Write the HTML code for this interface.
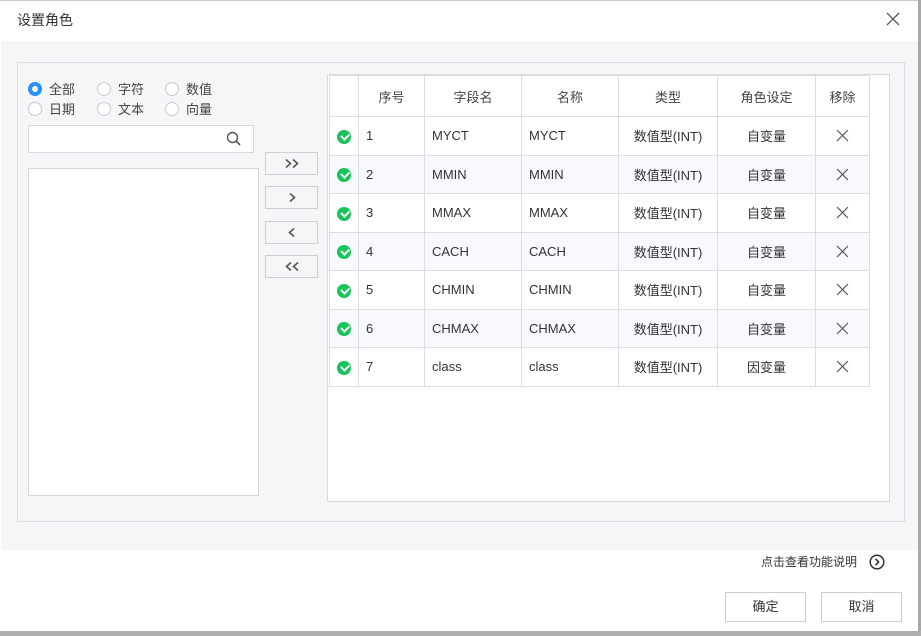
<!DOCTYPE html>
<html><head><meta charset="utf-8"><style>
*{box-sizing:border-box;margin:0;padding:0}
body{width:921px;height:636px;background:#fff;position:relative;overflow:hidden;font-family:"Liberation Sans","Noto Sans CJK SC",sans-serif;color:#333;font-size:13px}
.a{position:absolute}
.shR{left:918px;top:0;width:3px;height:636px;background:#a8a8a8}
.shB{left:0;top:631px;width:921px;height:5px;background:#b0b0b0}
.shT{left:0;top:0;width:921px;height:1px;background:#ccc}
.title{left:17px;top:10px;font-size:14px;color:#333}
.gray{left:1px;top:41px;width:917px;height:509px;background:#f5f6f8}
.panel{left:17px;top:62px;width:888px;height:460px;border:1px solid #dcdde0;background:#f5f6f8}
.rad{display:flex;align-items:center;font-size:13px;color:#444}
.rad i{width:14px;height:14px;border-radius:50%;border:1px solid #c7cad0;background:#fff;margin-right:7px;display:inline-block}
.rad i.on{border:4px solid #2a8ff7}
.box{background:#fff;border:1px solid #d5d7db}
.btn{background:#f5f6f8;border:1px solid #ccced2;width:53px;height:23px}
.btn svg{display:block;margin:5px auto 0}
table{border-collapse:collapse;position:absolute;left:329px;top:75px}
td{border:1px solid #dcdde0;height:38.5px;font-size:13px;color:#333;padding:0 0 0 7px}
tr.h td{height:41px;text-align:center;padding:0;color:#444}
tr td{background:#fff}
tr.alt td{background:#f7f9fd}
td.c{text-align:center;padding:0}
.ok{display:inline-block;width:14px;height:14px;border-radius:50%;background:#18c35b;position:relative;vertical-align:middle}
.ok:after{content:"";position:absolute;left:3.5px;top:3px;width:6px;height:3.5px;border-left:2px solid #fff;border-bottom:2px solid #fff;transform:rotate(-45deg)}
td.x svg{display:block;margin:0 auto}
.fb{border:1px solid #ccced2;background:#fff;width:81px;height:30px;font-size:13px;text-align:center;line-height:28px;color:#333}
</style></head><body>
<div class="a shT"></div>
<div class="a title">设置角色</div>
<svg class="a" style="left:886px;top:12px" width="14" height="14"><path d="M1 1L13 13M13 1L1 13" stroke="#555" stroke-width="1.3"/></svg>
<div class="a gray"></div>
<div class="a panel"></div>
<div class="a rad" style="left:28px;top:79px"><i class="on"></i>全部</div>
<div class="a rad" style="left:97px;top:79px"><i></i>字符</div>
<div class="a rad" style="left:165px;top:79px"><i></i>数值</div>
<div class="a rad" style="left:28px;top:99px"><i></i>日期</div>
<div class="a rad" style="left:97px;top:99px"><i></i>文本</div>
<div class="a rad" style="left:165px;top:99px"><i></i>向量</div>
<div class="a box" style="left:28px;top:125px;width:226px;height:28px"></div>
<svg class="a" style="left:226px;top:131px" width="16" height="16"><circle cx="6.5" cy="6.5" r="5" stroke="#555" stroke-width="1.4" fill="none"/><path d="M10.2 10.2L14 14" stroke="#555" stroke-width="1.6"/></svg>
<div class="a box" style="left:28px;top:168px;width:231px;height:328px"></div>
<div class="a btn" style="left:265px;top:152px"><svg width="16" height="11"><path d="M2 1.5L6.5 5.5L2 9.5M9 1.5L13.5 5.5L9 9.5" stroke="#555" stroke-width="1.6" fill="none"/></svg></div>
<div class="a btn" style="left:265px;top:186px"><svg width="10" height="11"><path d="M3 1.5L7.5 5.5L3 9.5" stroke="#555" stroke-width="1.6" fill="none"/></svg></div>
<div class="a btn" style="left:265px;top:221px"><svg width="10" height="11"><path d="M7 1.5L2.5 5.5L7 9.5" stroke="#555" stroke-width="1.6" fill="none"/></svg></div>
<div class="a btn" style="left:265px;top:255px"><svg width="16" height="11"><path d="M7 1.5L2.5 5.5L7 9.5M14 1.5L9.5 5.5L14 9.5" stroke="#555" stroke-width="1.6" fill="none"/></svg></div>
<div class="a box" style="left:327px;top:74px;width:563px;height:428px;border-color:#d8dade"></div>
<table>
<colgroup><col style="width:29px"><col style="width:66px"><col style="width:97px"><col style="width:97px"><col style="width:99px"><col style="width:98px"><col style="width:54px"></colgroup>
<tr class="h"><td></td><td>序号</td><td>字段名</td><td>名称</td><td>类型</td><td>角色设定</td><td>移除</td></tr>
<tr><td class="c"><span class="ok"></span></td><td>1</td><td>MYCT</td><td>MYCT</td><td class="c">数值型(INT)</td><td class="c">自变量</td><td class="c x"><svg width="13" height="13"><path d="M1 1L12 12M12 1L1 12" stroke="#555" stroke-width="1.2"/></svg></td></tr>
<tr class="alt"><td class="c"><span class="ok"></span></td><td>2</td><td>MMIN</td><td>MMIN</td><td class="c">数值型(INT)</td><td class="c">自变量</td><td class="c x"><svg width="13" height="13"><path d="M1 1L12 12M12 1L1 12" stroke="#555" stroke-width="1.2"/></svg></td></tr>
<tr><td class="c"><span class="ok"></span></td><td>3</td><td>MMAX</td><td>MMAX</td><td class="c">数值型(INT)</td><td class="c">自变量</td><td class="c x"><svg width="13" height="13"><path d="M1 1L12 12M12 1L1 12" stroke="#555" stroke-width="1.2"/></svg></td></tr>
<tr class="alt"><td class="c"><span class="ok"></span></td><td>4</td><td>CACH</td><td>CACH</td><td class="c">数值型(INT)</td><td class="c">自变量</td><td class="c x"><svg width="13" height="13"><path d="M1 1L12 12M12 1L1 12" stroke="#555" stroke-width="1.2"/></svg></td></tr>
<tr><td class="c"><span class="ok"></span></td><td>5</td><td>CHMIN</td><td>CHMIN</td><td class="c">数值型(INT)</td><td class="c">自变量</td><td class="c x"><svg width="13" height="13"><path d="M1 1L12 12M12 1L1 12" stroke="#555" stroke-width="1.2"/></svg></td></tr>
<tr class="alt"><td class="c"><span class="ok"></span></td><td>6</td><td>CHMAX</td><td>CHMAX</td><td class="c">数值型(INT)</td><td class="c">自变量</td><td class="c x"><svg width="13" height="13"><path d="M1 1L12 12M12 1L1 12" stroke="#555" stroke-width="1.2"/></svg></td></tr>
<tr><td class="c"><span class="ok"></span></td><td>7</td><td>class</td><td>class</td><td class="c">数值型(INT)</td><td class="c">因变量</td><td class="c x"><svg width="13" height="13"><path d="M1 1L12 12M12 1L1 12" stroke="#555" stroke-width="1.2"/></svg></td></tr>
</table>
<div class="a" style="left:761px;top:553px;font-size:12px;color:#333">点击查看功能说明</div>
<svg class="a" style="left:869px;top:554px" width="16" height="16"><circle cx="8" cy="8" r="6.8" stroke="#333" stroke-width="1.5" fill="none"/><path d="M6.5 4.8L9.6 8L6.5 11.2" stroke="#333" stroke-width="1.6" fill="none"/></svg>
<div class="a fb" style="left:725px;top:592px">确定</div>
<div class="a fb" style="left:821px;top:592px">取消</div>
<div class="a shR"></div>
<div class="a shB"></div>
</body></html>
